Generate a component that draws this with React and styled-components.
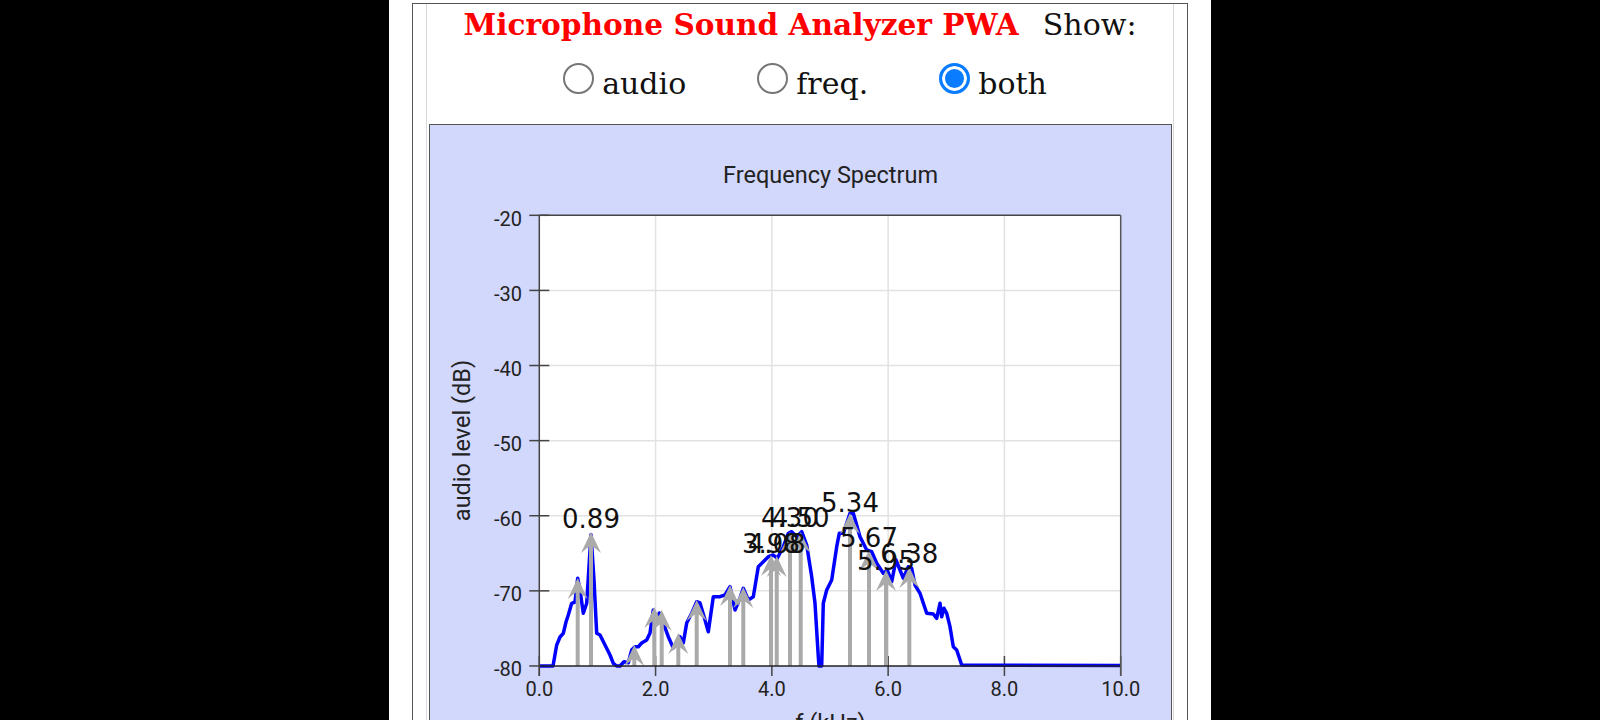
import React from 'react';
import styled, { createGlobalStyle } from 'styled-components';

const GlobalStyle = createGlobalStyle`
  html, body { margin: 0; padding: 0; background: #000; }
  body { overflow: hidden; }
`;

const Column = styled.div`
  width: 822px;
  margin: 0 auto;
  min-height: 720px;
  box-sizing: border-box;
  padding: 3px 23px 0;
  background: #fff;
`;

const Frame = styled.div`
  box-sizing: border-box;
  height: 760px;
  padding: 0 13px;
  border: 1px solid #555;
  background: #fff;
`;

const Inner = styled.div`
  height: 100%;
  border-left: 1px solid #d9d9d9;
  border-right: 1px solid #d9d9d9;
`;

const TitleRow = styled.div`
  text-align: center;
  font-family: "DejaVu Serif", serif;
  font-size: 30px;
  line-height: 41px;
  color: #111;
  white-space: nowrap;
`;

const AppName = styled.span`
  color: #ff0000;
  font-weight: bold;
  font-size: 29.6px;
  margin-right: 24px;
`;

const RadioRow = styled.div`
  display: flex;
  justify-content: center;
  gap: 71px;
  padding: 19px 0 0 10px;
  height: 40px;
`;

const RadioLabel = styled.label`
  display: flex;
  align-items: flex-end;
  font-family: "DejaVu Serif", serif;
  font-size: 30px;
  line-height: 40px;
  color: #111;
`;

const Radio = styled.input`
  appearance: none;
  box-sizing: border-box;
  width: 31px;
  height: 31px;
  margin: 0 8px 10px 0;
  border-radius: 50%;
  border: 2px solid #767676;
  background: #fff;
  &:checked {
    border: 3px solid #0a7cff;
    background: #0a7cff;
    box-shadow: inset 0 0 0 3px #fff;
  }
`;

const ChartPanel = styled.div`
  box-sizing: border-box;
  width: 743px;
  height: 620px;
  margin: 20px 0 0 2px;
  border: 1px solid #555;
  background: #d2d7fc;
  overflow: hidden;
`;

const ChartSvg = styled.svg`
  display: block;
`;

const X0 = 539.3, XK = 58.14;
const Y0 = 215.3, YD = 7.511;
const fx = (k) => X0 + k * XK;
const fy = (db) => Y0 + (-20 - db) * YD;
const PL = fx(0), PR = fx(10), PT = fy(-20), PB = fy(-80);

const trace = [
  [539, 666], [553, 666], [556.7, 645], [560, 637], [563.3, 633.3], [566, 622], [568.3, 615],
  [571.7, 603.3], [575, 602], [577.7, 578.3], [580, 590], [583.3, 613.3], [586.7, 603.3],
  [591, 534.7], [594, 580], [596.7, 633.3], [600, 635], [605, 645], [610, 655], [613.3, 663.3],
  [616.7, 666], [620, 666], [624, 661.7], [628.3, 662.7], [631.7, 650], [635, 646.7], [638.3, 646.7],
  [641.7, 643], [646.7, 640], [650, 633], [653.3, 610], [656, 623], [659.3, 613], [663.3, 623],
  [668.3, 636.7], [673.3, 648], [676.7, 643], [680, 636.7], [683.3, 643], [686.7, 623],
  [691.7, 613.3], [696.7, 601.7], [700, 603], [705, 620], [708.3, 631.7], [713.3, 596.7],
  [720, 596.7], [725, 595], [730, 586.7], [735, 610], [740, 598], [743.3, 588.3], [748.3, 600],
  [753.3, 596.7], [758.3, 566.7], [763.3, 561.7], [768.3, 556.7], [773.3, 555], [777.3, 558.3],
  [783.3, 546.7], [788.3, 533.3], [791.7, 531.7], [796.7, 536.7], [801.7, 531.7], [806.7, 545],
  [811.7, 576.7], [815, 603.3], [818.3, 656.7], [819, 666], [821.7, 666], [823.3, 603.3],
  [826.7, 590], [831.7, 580], [836.7, 546.7], [839.3, 533.3], [843.3, 533.3], [850, 513.3],
  [853.3, 513.3], [860, 536.7], [866.7, 550], [871.7, 551.7], [876.7, 563.3], [883.3, 573.3],
  [887.3, 570], [891.7, 581.7], [896, 560], [900, 570], [903.3, 578.3], [908.3, 566.7],
  [911.7, 568.3], [915, 585], [920, 593.3], [926.7, 613.3], [933.3, 614], [936.7, 618.3],
  [940, 603.3], [941.7, 616.7], [944, 608.3], [946.7, 613.3], [950, 626.7], [953.3, 646.7],
  [956.7, 650], [961.7, 665], [1121, 665.5],
];

const peaks = [
  [577.7, 578], [591, 532], [634.3, 645], [654.3, 607], [661.7, 610], [678.3, 633],
  [696.7, 600], [730, 585], [743.3, 587], [771, 555], [776.7, 556], [790, 532], [800.7, 532],
  [850, 513], [869, 550], [886, 570], [909.3, 567],
];

const peakLabels = [
  [591, 528, '0.89'], [771, 553, '3.98'], [776.7, 553, '4.08'], [790, 527, '4.30'],
  [800.7, 527, '4.50'], [850, 511.7, '5.34'], [869, 547, '5.67'], [886, 570, '5.95'],
  [909.3, 562.7, '6.38'],
];

const yTicks = [-20, -30, -40, -50, -60, -70, -80];
const xTicks = [0, 2, 4, 6, 8, 10];

function Spectrum() {
  const axisFont = { fontFamily: 'Roboto, "Liberation Sans", sans-serif' };
  return (
    <ChartSvg width="741" height="618" viewBox="430 125 741 618">
      <rect x={PL} y={PT} width={PR - PL} height={PB - PT} fill="#fff" />
      {xTicks.slice(1, -1).map((k) => (
        <line key={'gx' + k} x1={fx(k)} x2={fx(k)} y1={PT} y2={PB} stroke="#e2e2e2" strokeWidth="1.5" />
      ))}
      {yTicks.slice(1, -1).map((d) => (
        <line key={'gy' + d} x1={PL} x2={PR} y1={fy(d)} y2={fy(d)} stroke="#e2e2e2" strokeWidth="1.5" />
      ))}
      <text x="830.5" y="183.3" textAnchor="middle" fontSize="23.5" fill="#222" style={axisFont}>
        Frequency Spectrum
      </text>
      <text transform="translate(470 440.5) rotate(-90)" textAnchor="middle" fontSize="23.5" fill="#222" style={axisFont}>
        audio level (dB)
      </text>
      <text x="830.5" y="731" textAnchor="middle" fontSize="23.5" fill="#222" style={axisFont}>
        f (kHz)
      </text>
      {yTicks.map((d) => (
        <g key={'ty' + d}>
          <line x1={PL - 10} x2={PL + 10} y1={fy(d)} y2={fy(d)} stroke="#444" strokeWidth="1.5" />
          <text x="522" y={fy(d) + 10.5} textAnchor="end" fontSize="20" fill="#222" style={axisFont}>
            {d}
          </text>
        </g>
      ))}
      {xTicks.map((k) => (
        <g key={'tx' + k}>
          <line x1={fx(k)} x2={fx(k)} y1={PB - 10} y2={PB + 10} stroke="#444" strokeWidth="1.5" />
          <text x={fx(k)} y="696" textAnchor="middle" fontSize="20" fill="#222" style={axisFont}>
            {k.toFixed(1)}
          </text>
        </g>
      ))}
      <polyline
        points={trace.map((p) => p.join(',')).join(' ')}
        fill="none"
        stroke="#0000ff"
        strokeWidth="3.5"
        strokeLinejoin="round"
      />
      {peaks.map(([x, t], i) => (
        <g key={'pk' + i} fill="#aaaaaa">
          <line x1={x} x2={x} y1={t + 8} y2={PB} stroke="#aaaaaa" strokeWidth="4" />
          <polygon points={`${x},${t} ${x - 10},${t + 21} ${x},${t + 13} ${x + 10},${t + 21}`} />
        </g>
      ))}
      <line x1={PL} x2={PR} y1={PT} y2={PT} stroke="#444" strokeWidth="1.5" />
      <line x1={PL} x2={PR} y1={PB} y2={PB} stroke="#222" strokeWidth="1.5" />
      <line x1={PL} x2={PL} y1={PT} y2={PB + 10} stroke="#444" strokeWidth="1.5" />
      <line x1={PR} x2={PR} y1={PT} y2={PB + 10} stroke="#555" strokeWidth="1.5" />
      {peakLabels.map(([x, y, s]) => (
        <text
          key={s}
          x={x}
          y={y}
          textAnchor="middle"
          fontSize="26"
          fill="#111"
          style={{ fontFamily: '"DejaVu Sans", sans-serif' }}
        >
          {s}
        </text>
      ))}
    </ChartSvg>
  );
}

export default function App() {
  return (
    <>
      <GlobalStyle />
      <Column>
        <Frame>
          <Inner>
            <TitleRow>
              <AppName>Microphone Sound Analyzer PWA</AppName>
              Show:
            </TitleRow>
            <RadioRow>
              <RadioLabel>
                <Radio type="radio" name="show" value="audio" />
                audio
              </RadioLabel>
              <RadioLabel>
                <Radio type="radio" name="show" value="freq" />
                freq.
              </RadioLabel>
              <RadioLabel>
                <Radio type="radio" name="show" value="both" defaultChecked />
                both
              </RadioLabel>
            </RadioRow>
            <ChartPanel>
              <Spectrum />
            </ChartPanel>
          </Inner>
        </Frame>
      </Column>
    </>
  );
}
